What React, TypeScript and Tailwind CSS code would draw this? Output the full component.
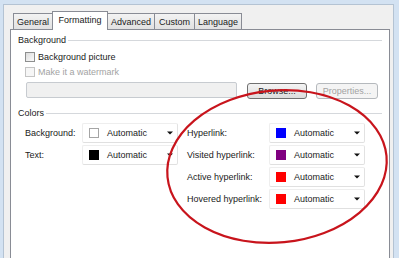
import React from "react";

const font = { fontFamily: '"Liberation Sans", Arial, sans-serif' };

function Tab({ label, w, selected }: { label: string; w: string; selected?: boolean }) {
  if (selected) {
    return (
      <div
        className={`${w} relative z-10 -ml-px -mb-px flex h-[19px] items-start justify-center border border-b-0 border-[#898c95] bg-white pt-[2px] text-[9px] leading-[12px] text-[#1a1a1a]`}
      >
        {label}
      </div>
    );
  }
  return (
    <div
      className={`${w} -ml-px flex h-[16px] items-center justify-center border border-b-0 border-[#898c95] bg-gradient-to-b from-[#f3f3f3] to-[#e1e1e1] text-[9px] leading-[12px] text-[#1a1a1a] first:ml-0`}
    >
      {label}
    </div>
  );
}

function GroupHeader({ label }: { label: string }) {
  return (
    <div className="flex h-[12px] items-center pl-[7px] pr-[7px]">
      <span className="text-[9px] leading-[12px] text-[#1a1a1a]">{label}</span>
      <div className="ml-[2px] h-px flex-1 bg-[#d5d8dc]" />
    </div>
  );
}

function Dropdown({ color, outlined }: { color: string; outlined?: boolean }) {
  return (
    <div className="flex h-[20px] w-[96px] items-center rounded-[2px] border border-[#eeeeee] border-b-[#e0e0e0] border-r-[#e2e2e2] bg-white pl-[6px] pr-[4px]">
      <div
        className={`h-[10px] w-[10px] ${outlined ? "border border-[#a5a5a5]" : ""}`}
        style={{ backgroundColor: color }}
      />
      <span className="ml-[8px] flex-1 text-[9px] leading-[12px] text-[#1a1a1a]">Automatic</span>
      <svg width="6" height="4" viewBox="0 0 6 4">
        <path d="M0 0.5 H6 L3 3.5 Z" fill="#111" />
      </svg>
    </div>
  );
}

function Label({ text, w, className = "" }: { text: string; w: string; className?: string }) {
  return (
    <div className={`${w} ${className} text-[9px] leading-[12px] text-[#1a1a1a]`}>{text}</div>
  );
}

export default function App() {
  return (
    <div
      className="relative h-[258px] w-[399px] overflow-hidden bg-[#d3e2f2] pl-[3px] pr-[5px] pt-[4px]"
      style={font}
    >
      <div className="flex h-[300px] flex-col border border-b-0 border-[#b4c3d3] bg-[#f0f0f0] pl-[6px] pr-[3px] pt-[6px]">
        {/* tabs */}
        <div className="flex h-[18px] items-end pl-[3px]">
          <Tab label="General" w="w-[40px]" />
          <Tab label="Formatting" w="w-[56px]" selected />
          <Tab label="Advanced" w="w-[48px]" />
          <Tab label="Custom" w="w-[41px]" />
          <Tab label="Language" w="w-[48px]" />
        </div>
        {/* panel */}
        <div className="flex flex-1 flex-col border border-[#898c95] bg-white pt-[4px]">
          <GroupHeader label="Background" />
          <div className="mt-[4px] flex h-[14px] items-center pl-[14px]">
            <div className="h-[10px] w-[10px] border border-[#8e8f8f] bg-gradient-to-br from-[#dcdcdc] to-[#fbfbfb]" />
            <span className="ml-[3px] text-[9px] leading-[12px] text-[#1a1a1a]">Background picture</span>
          </div>
          <div className="mt-[1px] flex h-[14px] items-center pl-[14px]">
            <div className="h-[10px] w-[10px] border border-[#c4c4c4] bg-[#f6f6f6]" />
            <span className="ml-[3px] text-[9px] leading-[12px] text-[#a3a3a3]">Make it a watermark</span>
          </div>
          <div className="mt-[3px] flex items-start pl-[15px]">
            <div className="h-[16px] w-[211px] rounded-[2px] border border-[#c7cbd0] bg-[#f0f0f0]" />
            <div className="ml-[10px] mt-px flex h-[16px] w-[60px] items-center justify-center rounded-[3px] border border-[#707070] bg-gradient-to-b from-[#f4f4f4] to-[#dcdcdc] text-[9px] leading-[12px] text-[#1a1a1a]">
              Browse...
            </div>
            <div className="ml-[9px] mt-px flex h-[16px] w-[62px] items-center justify-center rounded-[3px] border border-[#b5b9bd] bg-[#f4f4f4] text-[9px] leading-[12px] text-[#a3a3a3]">
              Properties...
            </div>
          </div>
          <div className="mt-[8px]">
            <GroupHeader label="Colors" />
          </div>
          <div className="mt-[4px] grid grid-cols-[57px_96px_9px_82px_96px] grid-rows-[20px_20px_20px_20px] items-center gap-y-[2px] pl-[14px]">
            <Label text="Background:" w="w-[57px]" />
            <Dropdown color="#ffffff" outlined />
            <div />
            <Label text="Hyperlink:" w="w-[82px]" />
            <Dropdown color="#0000ff" />

            <Label text="Text:" w="w-[57px]" />
            <Dropdown color="#000000" />
            <div />
            <Label text="Visited hyperlink:" w="w-[82px]" />
            <Dropdown color="#800080" />

            <Label text="Active hyperlink:" w="w-[82px]" className="col-start-4" />
            <Dropdown color="#ff0000" />

            <Label text="Hovered hyperlink:" w="w-[82px]" className="col-start-4" />
            <Dropdown color="#ff0000" />
          </div>
        </div>
      </div>
      {/* red annotation ellipse */}
      <svg
        className="pointer-events-none absolute left-0 top-0"
        width="399"
        height="258"
        viewBox="0 0 399 258"
      >
        <ellipse
          cx="277"
          cy="166.5"
          rx="110"
          ry="76"
          transform="rotate(-5.5 277 166.5)"
          fill="none"
          stroke="#c8141c"
          strokeWidth="2.2"
        />
      </svg>
    </div>
  );
}
